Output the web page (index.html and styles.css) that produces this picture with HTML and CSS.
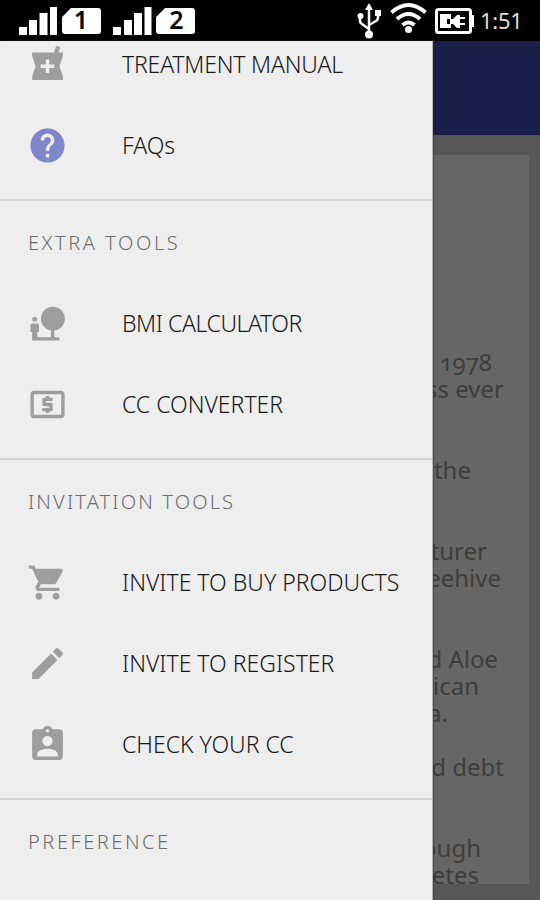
FILE: index.html
```
<!DOCTYPE html>
<html lang="en">
<head>
<meta charset="utf-8">
<title>Tools menu</title>
<link rel="stylesheet" href="styles.css">
</head>
<body>
<header class="status">
  <svg class="sims" viewBox="0 0 200 41" width="200" height="41">
    <path d="M19 27h8v8h-8zM29 20h8v15h-8zM39.500 13h8v22h-8zM50 7h7v28h-7zM113 27h8v8h-8zM124 20h8v15h-8zM134 13h8v22h-8zM144.500 7h7v28h-7z"/>
    <path d="M71 8h27q3 0 3 3v20q0 3-3 3H65q-3 0-3-3V17zM165 8h27q3 0 3 3v20q0 3-3 3h-33q-3 0-3-3V17z"/>
    <text x="81" y="29">1</text><text x="176.500" y="29">2</text>
  </svg>
  <svg class="signals" viewBox="350 0 130 41" width="130" height="41">
    <g class="line">
      <path d="M369 8v27M369 29l-7-5q-2-1-2-4v-4M369 25l7-4q2-1 2-4v-4" stroke-width="2.500"/>
      <path d="M391.500 12.500q17-15 34 0M397 19q11.500-10 23 0M402.500 25q6-5 12 0" stroke-width="4"/>
      <rect x="436.500" y="9.500" width="34" height="23" rx="2" stroke-width="3"/>
      <path d="M459 18h6M459 24h6" stroke-width="2"/>
    </g>
    <path d="M369 3l4 7h-8zM375 10h6v6h-6zM471 15h3v12h-3zM440 14h11v5h-4v5h4v4h-11zM450 19h3l4-4h3v13h-3l-4-4h-3z"/>
    <circle cx="360.500" cy="16" r="3"/><circle cx="369" cy="34.500" r="4"/><circle cx="408.500" cy="29.500" r="3.500"/>
  </svg>
  <span class="clock">1:51</span>
</header>
<main class="screen">
  <nav class="drawer">
    <a class="row"><svg class="icon" viewBox="0 0 24 24"><path d="M21 5h-2.640l1.140-3.140L17.150 1l-1.460 4H3v2l2 6-2 6v2h18v-2l-2-6 2-6V5zm-5 9h-3v3h-2v-3H8v-2h3V9h2v3h3v2z"/></svg><span class="snug">TREATMENT MANUAL</span></a>
    <a class="row"><svg class="icon help" viewBox="0 0 24 24"><path d="M12 2C6.480 2 2 6.480 2 12s4.480 10 10 10 10-4.480 10-10S17.520 2 12 2zm1 17h-2v-2h2v2zm2.070-7.750-.9.920C13.450 12.900 13 13.500 13 15h-2v-.5c0-1.100.45-2.100 1.170-2.830l1.240-1.260c.37-.36.59-.86.59-1.410 0-1.100-.9-2-2-2s-2 .9-2 2H8c0-2.210 1.790-4 4-4s4 1.790 4 4c0 .88-.36 1.680-.93 2.250z"/></svg><span>FAQs</span></a>
    <h2 class="group">EXTRA TOOLS</h2>
    <a class="row"><svg class="icon" viewBox="0 0 24 24"><path d="M22.170 9.170c0-3.870-3.130-7-7-7s-7 3.130-7 7c0 3.470 2.520 6.340 5.830 6.890V20H6v-3h1v-4c0-.55-.45-1-1-1H3c-.55 0-1 .45-1 1v4h1v5h16v-2h-3v-3.880c3.470-.41 6.170-3.370 6.170-6.950zM4.500 11c.83 0 1.500-.67 1.500-1.500S5.330 8 4.500 8 3 8.670 3 9.500 3.670 11 4.500 11z"/></svg><span class="tight">BMI CALCULATOR</span></a>
    <a class="row"><svg class="icon" viewBox="0 0 24 24"><path d="M11 17h2v-1h1c.55 0 1-.45 1-1v-3c0-.55-.45-1-1-1h-3v-1h4V8h-2V7h-2v1h-1c-.55 0-1 .45-1 1v3c0 .55.45 1 1 1h3v1H9v2h2v1zm9-13H4c-1.110 0-1.990.89-1.990 2L2 18c0 1.110.89 2 2 2h16c1.110 0 2-.89 2-2V6c0-1.110-.89-2-2-2zm0 14H4V6h16v12z"/></svg><span>CC CONVERTER</span></a>
    <h2 class="group invitation">INVITATION TOOLS</h2>
    <a class="row"><svg class="icon" viewBox="0 0 24 24"><path d="M7 18c-1.100 0-1.990.9-1.990 2S5.900 22 7 22s2-.9 2-2-.9-2-2-2zM1 2v2h2l3.600 7.590-1.350 2.450c-.16.280-.25.610-.25.960 0 1.100.9 2 2 2h12v-2H7.420c-.14 0-.25-.11-.25-.25l.03-.12.900-1.630h7.450c.75 0 1.410-.41 1.750-1.030l3.580-6.490c.08-.14.120-.31.120-.48 0-.55-.45-1-1-1H5.210l-.94-2H1zm16 16c-1.100 0-1.990.9-1.990 2s.89 2 1.990 2 2-.9 2-2-.9-2-2-2z"/></svg><span>INVITE TO BUY PRODUCTS</span></a>
    <a class="row"><svg class="icon" viewBox="0 0 24 24"><path d="M3 17.250V21h3.750L17.810 9.940l-3.750-3.750L3 17.250zM20.710 7.040c.39-.39.39-1.020 0-1.410l-2.340-2.340c-.39-.39-1.020-.39-1.410 0l-1.830 1.830 3.750 3.750 1.830-1.830z"/></svg><span>INVITE TO REGISTER</span></a>
    <a class="row"><svg class="icon" viewBox="0 0 24 24"><path d="M19 3h-4.180C14.400 1.840 13.300 1 12 1s-2.400.84-2.820 2H5c-1.100 0-2 .9-2 2v14c0 1.100.9 2 2 2h14c1.100 0 2-.9 2-2V5c0-1.100-.9-2-2-2zm-7 0c.55 0 1 .45 1 1s-.45 1-1 1-1-.45-1-1 .45-1 1-1zm0 4c1.660 0 3 1.340 3 3s-1.340 3-3 3-3-1.340-3-3 1.340-3 3-3zm6 12H6v-1.400c0-2 4-3.100 6-3.100s6 1.100 6 3.100V19z"/></svg><span>CHECK YOUR CC</span></a>
    <h2 class="group">PREFERENCE</h2>
  </nav>
  <section class="page">
    <div class="toolbar"></div>
    <article class="card">
      <p class="e12 year">1978</p><p class="e0">ss ever</p>
      <p class="gap2 e33">the</p>
      <p class="gap2 e17">turer</p><p class="e3">eehive</p>
      <p class="gap2 e6">d Aloe</p><p class="e25">ican</p><p class="e56">a.</p>
      <p class="gap1 e0">d debt</p>
      <p class="gap2 e23">ough</p><p class="e25">etes</p>
    </article>
  </section>
</main>
</body>
</html>
```
FILE: styles.css
```
* { box-sizing: border-box; margin: 0; }
body {
  width: 540px;
  height: 900px;
  overflow: hidden;
  font-family: "Noto Sans", "Open Sans", sans-serif;
}
.status {
  display: flex;
  height: 41px;
  background: #000;
  color: #ddd;
  fill: #fff;
}
.sims text { fill: #000; font-size: 25px; font-weight: 600; text-anchor: middle; }
.signals { margin-left: 150px; }
.line { fill: none; stroke: #fff; }
.clock { font-size: 22px; line-height: 40px; letter-spacing: -0.3px; }
.screen {
  display: grid;
  grid-template-columns: 433px 107px;
  height: 859px;
}
.drawer {
  z-index: 1;
  height: 859px;
  overflow: hidden;
  background: #eee;
  border-right: 1px solid #b5b5b5;
  box-shadow: 0 0 2px #222;
}
.row {
  display: flex;
  align-items: center;
  height: 81px;
  padding-left: 27px;
  color: #181818;
  font-size: 23px;
  font-weight: 300;
  white-space: nowrap;
}
.row:first-child { margin-top: -18px; }
.icon { width: 41px; height: 41px; margin: 2px 54px 0 0; fill: #9e9e9e; flex: none; }
.help { fill: #7f87cb; }
.snug { letter-spacing: -0.2px; }
.tight { letter-spacing: -0.42px; }
.group {
  height: 83px;
  margin-top: 14px;
  padding-left: 28px;
  border-top: 2px solid #d5d5d5;
  color: #6c6c6c;
  font-size: 20px;
  font-weight: 300;
  letter-spacing: 2.55px;
  line-height: 84px;
  white-space: nowrap;
}
.invitation { letter-spacing: 2.15px; }
.page { background: #575757; }
.toolbar { height: 94px; background: #1a1f48; }
.card {
  height: 729px;
  margin: 20px 11px 0 0;
  padding: 193px 25px 0 0;
  background: #666;
  color: #3d3d3d;
  font-size: 24px;
  line-height: 27px;
}
.card p { display: flex; justify-content: flex-end; white-space: nowrap; }
.year { font-feature-settings: "onum"; }
.gap1 { margin-top: 27px; }
.card .gap2 { margin-top: 54px; }
.e3 { padding-right: 3px; }
.e6 { padding-right: 6px; }
.e12 { padding-right: 12px; }
.e17 { padding-right: 17px; }
.e23 { padding-right: 23px; }
.e25 { padding-right: 25px; }
.e33 { padding-right: 33px; }
.e56 { padding-right: 56px; }
```
